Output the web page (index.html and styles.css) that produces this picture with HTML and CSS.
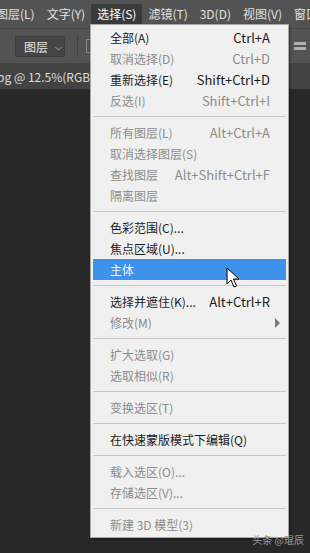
FILE: index.html
```html
<!DOCTYPE html>
<html lang="zh-CN">
<head>
  <meta charset="UTF-8" />
  <title>选择</title>
  <link rel="stylesheet" href="styles.css">
</head>
<body>
  <div class="menubar">
    <span class="top-item">图层(L)</span>
    <span class="top-item">文字(Y)</span>
    <span class="top-item active">选择(S)</span>
    <span class="top-item">滤镜(T)</span>
    <span class="top-item">3D(D)</span>
    <span class="top-item">视图(V)</span>
    <span class="top-item">窗口</span>
  </div>

  <div class="optionsbar">
    <div class="layer-select">图层
      <svg class="caret" width="7" height="5" viewBox="0 0 7 5"><path d="M0.5 1 L3.5 4 L6.5 1" fill="none" stroke="#a8a8a8" stroke-width="1"/></svg>
    </div>
    <div class="opt-sep"></div>
    <div class="opt-box"></div>
    <div class="opt-icon"><span></span><span></span></div>
  </div>

  <div class="tabs">
    <span class="tab">pg @ 12.5%(RGB/8)</span>
  </div>

  <div class="canvas"></div>

  <div class="menu">
    <div class="item"><span>全部(A)</span><span class="key">Ctrl+A</span></div>
    <div class="item off"><span>取消选择(D)</span><span class="key">Ctrl+D</span></div>
    <div class="item"><span>重新选择(E)</span><span class="key">Shift+Ctrl+D</span></div>
    <div class="item off"><span>反选(I)</span><span class="key">Shift+Ctrl+I</span></div>
    <div class="sep"></div>
    <div class="item off"><span>所有图层(L)</span><span class="key">Alt+Ctrl+A</span></div>
    <div class="item off"><span>取消选择图层(S)</span><span></span></div>
    <div class="item off"><span>查找图层</span><span class="key">Alt+Shift+Ctrl+F</span></div>
    <div class="item off"><span>隔离图层</span><span></span></div>
    <div class="sep"></div>
    <div class="item"><span>色彩范围(C)...</span><span></span></div>
    <div class="item"><span>焦点区域(U)...</span><span></span></div>
    <div class="item hover"><span>主体</span><span></span></div>
    <div class="sep"></div>
    <div class="item"><span>选择并遮住(K)...</span><span class="key">Alt+Ctrl+R</span></div>
    <div class="item off"><span>修改(M)</span><span class="arrow"></span></div>
    <div class="sep"></div>
    <div class="item off"><span>扩大选取(G)</span><span></span></div>
    <div class="item off"><span>选取相似(R)</span><span></span></div>
    <div class="sep"></div>
    <div class="item off"><span>变换选区(T)</span><span></span></div>
    <div class="sep"></div>
    <div class="item"><span>在快速蒙版模式下编辑(Q)</span><span></span></div>
    <div class="sep"></div>
    <div class="item off"><span>载入选区(O)...</span><span></span></div>
    <div class="item off"><span>存储选区(V)...</span><span></span></div>
    <div class="sep"></div>
    <div class="item off"><span>新建 3D 模型(3)</span><span></span></div>
  </div>

  <svg class="cursor" width="14" height="22" viewBox="0 0 14 22">
    <path d="M1 1 L1 17 L5 13 L8 20 L10.5 19 L7.5 12 L13 12 Z" fill="#fff" stroke="#000" stroke-width="1" stroke-linejoin="round"/>
  </svg>

  <div class="watermark">头条 @琨辰</div>
</body>
</html>
```

FILE: styles.css
```css
body {
  margin: 0;
  width: 310px;
  height: 553px;
  overflow: hidden;
  background: #282828;
  font-family: "Noto Sans CJK SC", "Noto Sans", sans-serif;
  font-size: 12px;
  position: relative;
}

.menubar {
  height: 28px;
  background: #535353;
  display: flex;
  align-items: center;
  color: #e2e2e2;
  white-space: nowrap;
  margin-left: -10px;
}

.top-item {
  padding: 2px 6px;
  line-height: 16px;
}

.top-item.active {
  background: #3a3a3a;
  color: #fff;
}

.optionsbar {
  height: 34px;
  background: #535353;
  border-top: 1px solid #474747;
  display: flex;
  align-items: center;
  gap: 8px;
  padding-left: 15px;
}

.layer-select {
  width: 50px;
  height: 21px;
  box-sizing: border-box;
  background: #454545;
  border: 1px solid #3c3c3c;
  border-radius: 2px;
  color: #e6e6e6;
  font-size: 12px;
  line-height: 19px;
  padding-left: 8px;
}

.caret {
  margin-left: 4px;
  vertical-align: 1px;
}

.opt-sep {
  width: 1px;
  height: 22px;
  background: #444;
  margin-left: 4px;
}

.opt-box {
  width: 10px;
  height: 12px;
  border: 1px solid #8a8a8a;
}

.opt-icon {
  margin-left: auto;
  margin-right: 4px;
  display: flex;
  flex-direction: column;
  gap: 2px;
}

.opt-icon span {
  display: block;
  width: 12px;
  height: 3px;
  background: #b0b0b0;
}

.tabs {
  height: 26px;
  background: #424242;
  display: flex;
  align-items: center;
  color: #dcdcdc;
  font-size: 12px;
  white-space: nowrap;
  margin-left: -3px;
}

.menu {
  position: absolute;
  left: 90px;
  top: 24px;
  width: 197px;
  padding: 2px 0;
  background: #f0f0f0;
  border: 1px solid #a8a8a8;
  box-shadow: 1px 1px 2px rgba(0,0,0,0.4);
}

.item {
  display: flex;
  justify-content: space-between;
  align-items: center;
  height: 21px;
  margin: 0 2px;
  padding: 0 16px 0 17px;
  color: #1b1b1b;
  white-space: nowrap;
}

.key {
  font-size: 13px;
}

.item.off {
  color: #8c8c8c;
}

.item.hover {
  background: #3f92ec;
  color: #f4f8ff;
}

.arrow {
  width: 0;
  height: 0;
  border-left: 5px solid #7a7a7a;
  border-top: 5px solid transparent;
  border-bottom: 5px solid transparent;
  margin-right: -10px;
}

.sep {
  height: 1px;
  margin: 5px 2px;
  background: #c6c6c6;
}

.cursor {
  position: absolute;
  left: 226px;
  top: 267px;
}

.watermark {
  position: absolute;
  right: 6px;
  bottom: 6px;
  font-size: 10px;
  color: #9a9a9a;
}
```
